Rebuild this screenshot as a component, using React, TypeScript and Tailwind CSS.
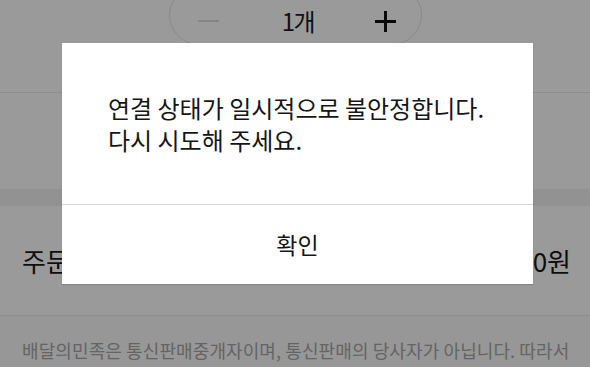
import React from "react";

const font = { fontFamily: '"Noto Sans CJK KR", "Noto Sans", sans-serif' };

export default function App() {
  return (
    <div className="relative w-[590px] h-[367px] overflow-hidden bg-[#9a9a9a]" style={font}>
      {/* Stepper section */}
      <div className="h-[92px] flex justify-center">
        <div className="-mt-[15px] w-[253px] h-[60px] rounded-full border border-[#8a8a8a] flex items-center justify-between pl-[28px] pr-[24px] pt-[12px]">
          <span className="block w-[21px] h-[2px] bg-[#858585]" />
          <span className="text-[24px] leading-none text-[#111] tracking-[-1.5px] ml-[4px]">1개</span>
          <svg width="23" height="23" viewBox="0 0 23 23">
            <path d="M11.5 1v21M1 11.5h21" stroke="#0a0a0a" strokeWidth="3" />
          </svg>
        </div>
      </div>
      <div className="h-px bg-[#8d8d8d]" />
      <div className="h-[96px]" />
      <div className="h-[17px] bg-[#929292]" />
      {/* Order total row */}
      <div className="h-[109px] flex items-center justify-between pl-[22px] pr-[19px]">
        <span className="text-[26px] text-[#0e0e0e]">주문금액</span>
        <span className="text-[26px] text-[#0e0e0e]">13,000원</span>
      </div>
      <div className="h-px bg-[#8d8d8d]" />
      <div className="bg-[#979797] pt-[20px] px-[22px]">
        <p className="text-[18px] leading-[28px] tracking-[0.1px] text-[#646464] whitespace-nowrap">
          배달의민족은 통신판매중개자이며, 통신판매의 당사자가 아닙니다. 따라서
          <br />
          배달의민족은 상품, 거래정보 및 거래에 대하여 책임을 지지 않습니다.
        </p>
      </div>

      {/* Modal */}
      <div className="absolute left-[62px] top-[43px] w-[471px] h-[241px] bg-white flex flex-col shadow-[0_1px_1px_rgba(0,0,0,0.15)]">
        <div className="h-[161px] pl-[46px] pt-[49px]">
          <p className="text-[24px] leading-[32px] text-[#151515]">
            연결 상태가 일시적으로 불안정합니다.
            <br />
            다시 시도해 주세요.
          </p>
        </div>
        <div className="h-px bg-[#d6d6d6]" />
        <button className="flex-1 flex items-center justify-center text-[23px] text-[#151515]">
          확인
        </button>
      </div>
    </div>
  );
}
